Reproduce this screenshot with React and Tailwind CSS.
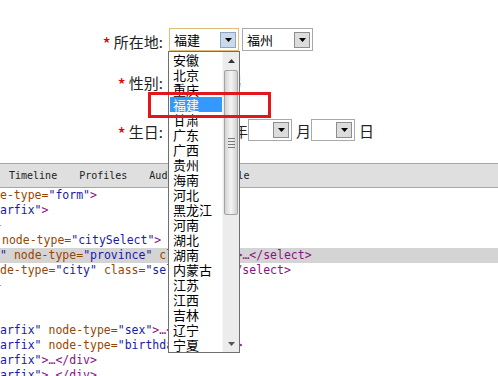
import React from "react";

const cjk = { fontFamily: '"Noto Sans CJK SC", "Noto Sans", sans-serif' };
const mono = { fontFamily: '"DejaVu Sans Mono", "Liberation Mono", monospace' };

const provinces = [
  "安徽", "北京", "重庆", "福建", "甘肃", "广东", "广西", "贵州", "海南", "河北",
  "黑龙江", "河南", "湖北", "湖南", "内蒙古", "江苏", "江西", "吉林", "辽宁", "宁夏",
];

function Arrow({ color = "#000" }) {
  return (
    <svg width="7" height="4" viewBox="0 0 7 4">
      <polygon points="0,0 7,0 3.5,4" fill={color} />
    </svg>
  );
}

function SelectBox({ value, width, focused, hover }) {
  return (
    <div
      className={`flex items-center justify-between bg-white h-full border ${
        focused ? "border-[#e2bd78]" : "border-[#a9a9a9]"
      }`}
      style={{ width }}
    >
      <span className="pl-[4px] text-[13px] leading-none text-black" style={cjk}>
        {value}
      </span>
      <div
        className={`mr-[2px] w-[16px] h-[16px] flex items-center justify-center border ${
          hover
            ? "bg-[#cbd9ea] border-[#8ea6c4]"
            : "bg-[#dcdcdc] border-[#8d8d8d]"
        }`}
      >
        <Arrow />
      </div>
    </div>
  );
}

const A = ({ children }) => <span className="text-[#994500]">{children}</span>;
const V = ({ children }) => <span className="text-[#1a1aa6]">{children}</span>;
const T = ({ children }) => <span className="text-[#881280]">{children}</span>;

function Line({ children, hl, pl = "" }) {
  return (
    <div
      className={`h-[15px] leading-[15px] whitespace-pre ${hl ? "bg-[#d4d4d4]" : ""} ${pl}`}
    >
      {children}
    </div>
  );
}

function Star() {
  return (
    <span className="text-[#e30000] text-[18px] relative top-[3px] mr-[3px]">*</span>
  );
}

export default function App() {
  return (
    <div className="relative w-[498px] h-[376px] overflow-hidden bg-white">
      {/* FORM */}
      <div className="h-[163px] pt-[28px] flex flex-col text-[15px] text-[#222]" style={cjk}>
        <div className="h-[23px] flex items-center">
          <div className="w-[163px] text-right leading-none">
            <Star />
            所在地:
          </div>
          <div className="ml-[6px] h-full flex gap-[3px]">
            <SelectBox value="福建" width={70} focused hover />
            <SelectBox value="福州" width={71} />
          </div>
        </div>

        <div className="mt-[18px] h-[23px] flex items-center">
          <div className="w-[163px] text-right leading-none">
            <Star />
            性别:
          </div>
          <span className="ml-[64px] leading-none">男</span>
        </div>

        <div className="mt-[27px] h-[22px] flex items-center">
          <div className="w-[163px] text-right leading-none">
            <Star />
            生日:
          </div>
          <div className="ml-[5px] h-full">
            <SelectBox value="" width={60} />
          </div>
          <span className="ml-[5px] w-[15px] leading-none">年</span>
          <div className="h-full">
            <SelectBox value="" width={44} />
          </div>
          <span className="ml-[4px] w-[15px] leading-none">月</span>
          <div className="h-full">
            <SelectBox value="" width={44} />
          </div>
          <span className="ml-[4px] leading-none">日</span>
        </div>
      </div>

      {/* DEVTOOLS TOOLBAR */}
      <div
        className="h-[25px] bg-[#dfdfdf] border-t border-b border-[#a6a6a6] flex items-center text-[10px] text-[#222]"
        style={mono}
      >
        <span className="ml-[9px]">Timeline</span>
        <span className="ml-[22px]">Profiles</span>
        <span className="ml-[22px]">Audits</span>
        <span className="ml-[22px]">Console</span>
      </div>

      {/* ELEMENTS TREE */}
      <div className="text-[11.5px]" style={mono}>
        <Line>
          <A>e-type=</A>
          <V>"form"</V>
          <T>&gt;</T>
        </Line>
        <Line>
          <V>arfix"</V>
          <T>&gt;</T>
        </Line>
        <Line pl="-ml-[4px]">
          <span className="text-[#999]">-</span>
        </Line>
        <Line pl="pl-[2px]">
          <A>node-type=</A>
          <V>"citySelect"</V>
          <T>&gt;</T>
        </Line>
        <Line hl>
          <V>"</V> <A>node-type=</A>
          <V>"province"</V> <A>class=</A>
          <V>"sel"</V>
          <T>&gt;…&lt;/select&gt;</T>
        </Line>
        <Line>
          <A>de-type=</A>
          <V>"city"</V> <A>class=</A>
          <V>"sel-city"</V>
          <T>&gt;…&lt;/select&gt;</T>
        </Line>
        <Line pl="-ml-[4px]">
          <span className="text-[#999]">-</span>
        </Line>
        <Line> </Line>
        <Line> </Line>
        <Line>
          <V>arfix"</V> <A>node-type=</A>
          <V>"sex"</V>
          <T>&gt;…&lt;/div&gt;</T>
        </Line>
        <Line>
          <V>arfix"</V> <A>node-type=</A>
          <V>"birthday"</V>
          <T>&gt;…&lt;/div&gt;</T>
        </Line>
        <Line>
          <V>arfix"</V>
          <T>&gt;…&lt;/div&gt;</T>
        </Line>
        <Line>
          <V>arfix"</V>
          <T>&gt;…&lt;/div&gt;</T>
        </Line>
      </div>

      {/* OPEN DROPDOWN LIST */}
      <div
        className="absolute left-[168px] top-[51px] w-[72px] h-[302px] bg-white border border-[#6f6f6f] flex"
        style={cjk}
      >
        <div className="w-[53px] pl-[1px]">
          {provinces.map((p) => (
            <div
              key={p}
              className={`h-[15px] leading-[15px] pl-[3px] text-[13px] ${
                p === "福建" ? "bg-[#3399ff] text-white" : "text-black"
              }`}
            >
              {p}
            </div>
          ))}
        </div>
        <div className="flex-1 bg-[#ececec] border-l border-[#f6f6f6] flex flex-col">
          <div className="h-[17px] flex items-center justify-center">
            <svg width="7" height="4" viewBox="0 0 7 4">
              <polygon points="3.5,0 7,4 0,4" fill="#333" />
            </svg>
          </div>
          <div className="mt-[1px] mx-[1px] h-[145px] rounded-[2px] border border-[#a3a3a3] bg-gradient-to-r from-[#d4d4d4] via-[#f5f5f5] to-[#cfcfcf] flex flex-col items-center justify-center gap-[2px]">
            <div className="w-[7px] h-[1px] bg-[#777]" />
            <div className="w-[7px] h-[1px] bg-[#777]" />
            <div className="w-[7px] h-[1px] bg-[#777]" />
            <div className="w-[7px] h-[1px] bg-[#777]" />
          </div>
          <div className="flex-1" />
          <div className="h-[17px] flex items-center justify-center">
            <Arrow color="#555" />
          </div>
        </div>
      </div>

      {/* RED ANNOTATION */}
      <div className="absolute left-[148px] top-[92px] w-[123px] h-[26px] border-[3px] border-[#e3161b]" />
    </div>
  );
}
